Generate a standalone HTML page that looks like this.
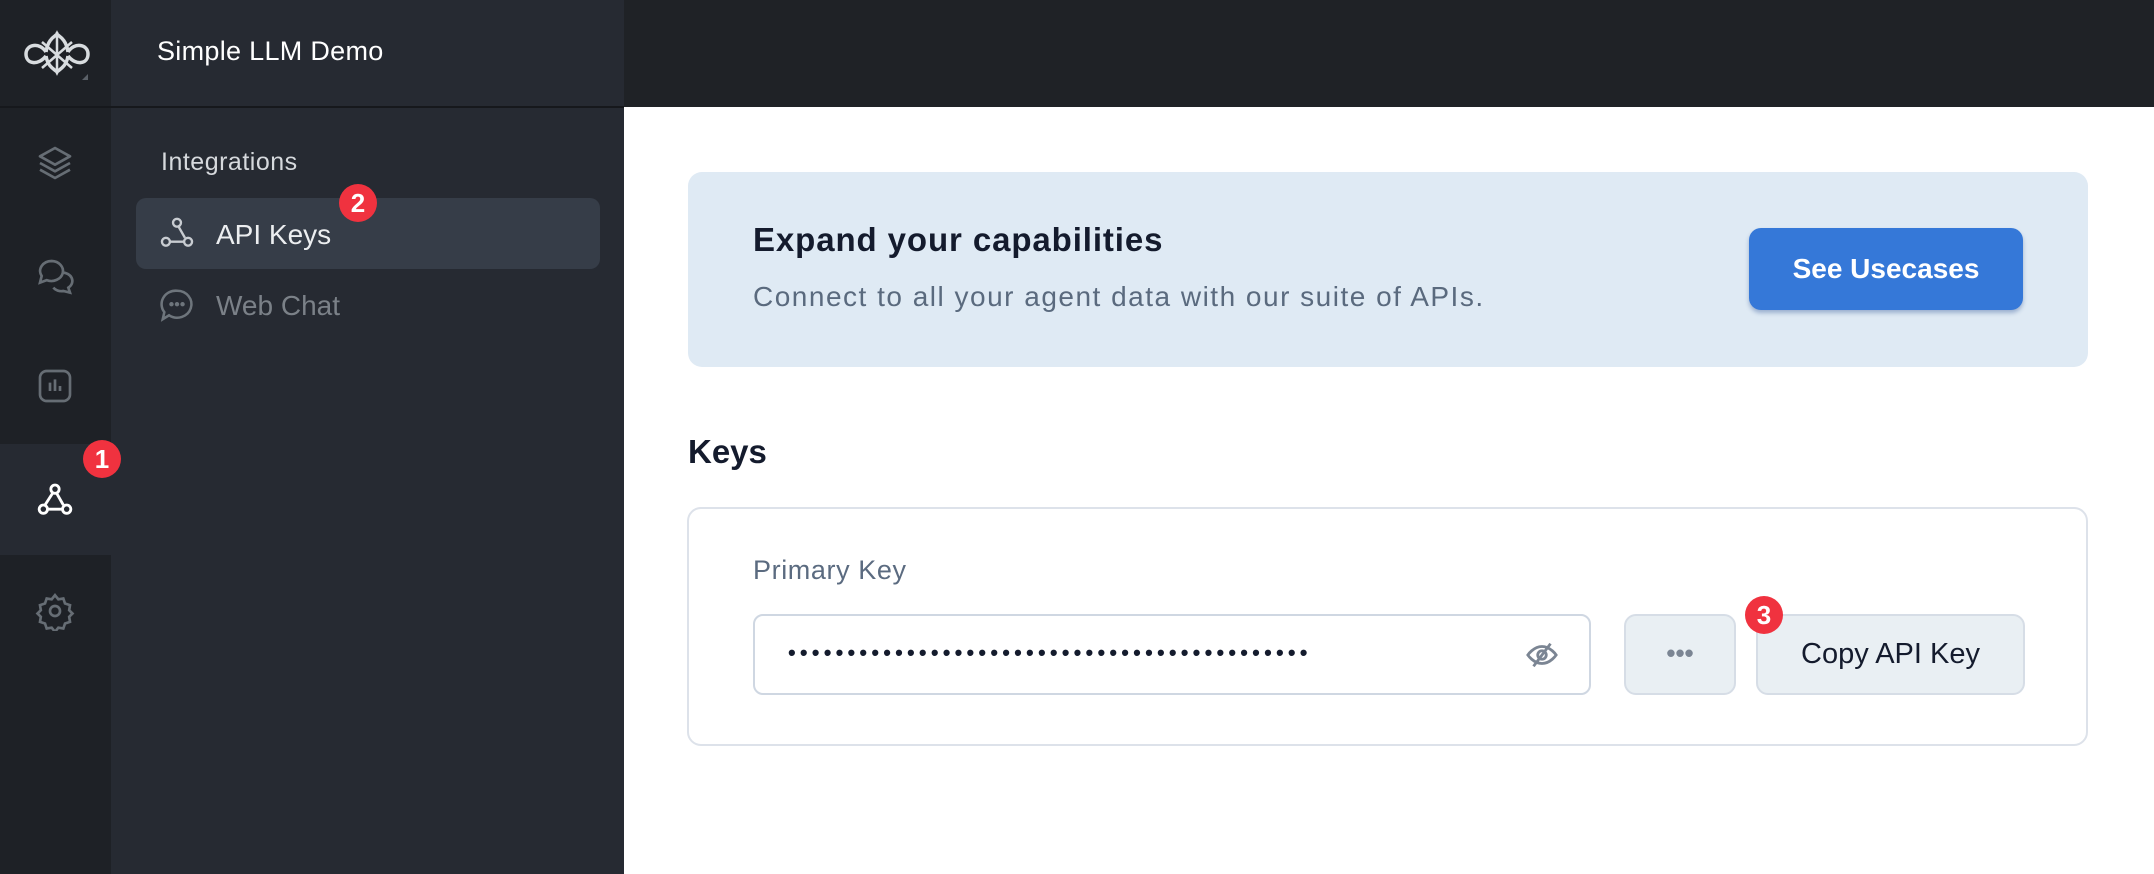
<!DOCTYPE html>
<html><head><meta charset="utf-8"><style>
*{box-sizing:border-box;margin:0;padding:0}
body{width:2154px;height:874px;overflow:hidden;background:#fff;font-family:"Liberation Sans",sans-serif;position:relative}
.abs{position:absolute}
.rail{left:0;top:0;width:111px;height:874px;background:#1e2126}
.side{left:111px;top:0;width:513px;height:874px;background:#262a32}
.top{left:624px;top:0;width:1530px;height:107px;background:#1f2226}
.badge{position:absolute;width:38px;height:38px;border-radius:50%;background:#f0323f;color:#fff;font-weight:bold;font-size:26px;text-align:center;line-height:38px}
.ic{position:absolute;width:40px;height:40px}
</style></head><body>
<div class="abs rail"></div>
<div class="abs side"></div>
<div class="abs top"></div>
<div class="abs" style="left:0;top:106px;width:624px;height:2px;background:#16181c"></div>
<!-- logo -->
<svg class="abs" style="left:22px;top:28px" width="70" height="58" viewBox="0 0 70 58" fill="none" stroke="#d8dcdf" stroke-width="3.5">
<path d="M24 24c-6-10-20-8-20 2s12 12 20 2M46 24c6-10 20-8 20 2s-12 12-20 2M24 24c2-14 10-16 11-18 1 2 9 4 11 18M24 28c2 12 10 14 11 16 1-2 9-4 11-16"/>
<path d="M35 4v38M20 14l30 26M50 14L20 40" stroke-width="2.5"/>
<path d="M60 52l6-6v6z" fill="#5b6168" stroke="none"/>
</svg>
<div class="abs" style="left:157px;top:36px;color:#fff;font-size:27px;letter-spacing:0.3px">Simple LLM Demo</div>
<!-- rail icons -->
<svg class="ic" style="left:35px;top:143px" viewBox="0 0 24 24" fill="none" stroke="#666d74" stroke-width="1.6" stroke-linejoin="round"><path d="M12 3l9 5-9 5-9-5z"/><path d="M3 12l9 5 9-5"/><path d="M3 16l9 5 9-5"/></svg>
<svg class="ic" style="left:35px;top:256px" viewBox="0 0 24 24" fill="none" stroke="#666d74" stroke-width="1.6"><path d="M10 3a7 6 0 1 1-3 11.5L3 16l1-4A7 6 0 0 1 10 3z"/><path d="M16 10a6 5 0 0 1 4 9l1 3-4-1a6 5 0 0 1-6-2"/></svg>
<svg class="ic" style="left:35px;top:366px" viewBox="0 0 24 24" fill="none" stroke="#666d74" stroke-width="1.6"><rect x="3" y="3" width="18" height="18" rx="4"/><path d="M9 10v5M12 8v7M15 12v3"/></svg>
<div class="abs" style="left:0;top:444px;width:111px;height:111px;background:#262a32"></div>
<svg class="ic" style="left:35px;top:480px" viewBox="0 0 24 24" fill="none" stroke="#fff" stroke-width="1.7"><circle cx="12" cy="5.5" r="2.5"/><circle cx="5" cy="17.5" r="2.5"/><circle cx="19" cy="17.5" r="2.5"/><path d="M13 8l4 7M7.5 17.5h9M10.5 8L6 15"/></svg>
<div class="badge" style="left:83px;top:440px">1</div>
<svg class="ic" style="left:35px;top:591px" viewBox="0 0 24 24" fill="none" stroke="#666d74" stroke-width="1.6"><circle cx="12" cy="12" r="3"/><path d="M12 2.5l2 2.5 3-.5 1 3 3 1-.5 3 2 2-2 2 .5 3-3 1-1 3-3-.5-2 2.5-2-2.5-3 .5-1-3-3-1 .5-3-2-2 2-2-.5-3 3-1 1-3 3 .5z"/></svg>
<!-- sidebar -->
<div class="abs" style="left:161px;top:148px;color:#d6d9dd;font-size:25px;letter-spacing:0.5px">Integrations</div>
<div class="abs" style="left:136px;top:198px;width:464px;height:71px;border-radius:10px;background:#363d48"></div>
<svg class="abs" style="left:158px;top:214px" width="38" height="38" viewBox="0 0 24 24" fill="none" stroke="#c8ccd1" stroke-width="1.5"><circle cx="12" cy="5.5" r="2.5"/><circle cx="5" cy="17.5" r="2.5"/><circle cx="19" cy="17.5" r="2.5"/><path d="M13 8l4 7M7.5 17.5h9"/></svg>
<div class="abs" style="left:216px;top:219px;color:#eceef0;font-size:28px">API Keys</div>
<div class="badge" style="left:339px;top:184px">2</div>
<svg class="abs" style="left:158px;top:286px" width="38" height="38" viewBox="0 0 24 24" fill="none" stroke="#6e757c" stroke-width="1.6"><path d="M12 3a9 8.5 0 1 1-5 15.5L3 21l1-4.5A9 8.5 0 0 1 12 3z"/><circle cx="8.5" cy="11.5" r=".6" fill="#6e757c"/><circle cx="12" cy="11.5" r=".6" fill="#6e757c"/><circle cx="15.5" cy="11.5" r=".6" fill="#6e757c"/></svg>
<div class="abs" style="left:216px;top:290px;color:#7b8188;font-size:28px">Web Chat</div>
<!-- banner -->
<div class="abs" style="left:688px;top:172px;width:1400px;height:195px;border-radius:14px;background:#dfeaf4"></div>
<div class="abs" style="left:753px;top:221px;color:#141b2d;font-size:33px;font-weight:bold;letter-spacing:0.9px">Expand your capabilities</div>
<div class="abs" style="left:753px;top:281px;color:#5a6a7e;font-size:28px;letter-spacing:1.5px">Connect to all your agent data with our suite of APIs.</div>
<div class="abs" style="left:1749px;top:228px;width:274px;height:82px;border-radius:12px;background:#3578d8;box-shadow:0 3px 4px rgba(30,70,140,.35);color:#fff;font-size:28px;font-weight:bold;text-align:center;line-height:82px">See Usecases</div>
<div class="abs" style="left:688px;top:433px;color:#141b2d;font-size:33px;font-weight:bold">Keys</div>
<!-- card -->
<div class="abs" style="left:687px;top:507px;width:1401px;height:239px;border-radius:14px;border:2px solid #dde2ea"></div>
<div class="abs" style="left:753px;top:555px;color:#5b6b80;font-size:27px;letter-spacing:0.6px">Primary Key</div>
<div class="abs" style="left:753px;top:614px;width:838px;height:81px;border-radius:10px;border:2px solid #cfd7e2;background:#fff"></div>
<div class="abs" style="left:788px;top:640px;color:#141b2d;font-size:22px;letter-spacing:4.2px;font-weight:bold">••••••••••••••••••••••••••••••••••••••••••••</div>
<svg class="abs" style="left:1525px;top:638px" width="34" height="34" viewBox="0 0 24 24" fill="none" stroke="#7b8593" stroke-width="2"><path d="M2 12s4-6 10-6 10 6 10 6-4 6-10 6S2 12 2 12z"/><circle cx="12" cy="12" r="3"/><path d="M18 4L6 20"/></svg>
<div class="abs" style="left:1624px;top:614px;width:112px;height:81px;border-radius:12px;border:2px solid #d6dde6;background:#e9eff3;color:#7b8593;font-size:26px;text-align:center;line-height:74px;font-weight:bold">•••</div>
<div class="abs" style="left:1756px;top:614px;width:269px;height:81px;border-radius:12px;border:2px solid #d6dde6;background:#e9eff3;color:#141b2d;font-size:29px;text-align:center;line-height:77px">Copy API Key</div>
<div class="badge" style="left:1745px;top:596px">3</div>
</body></html>
